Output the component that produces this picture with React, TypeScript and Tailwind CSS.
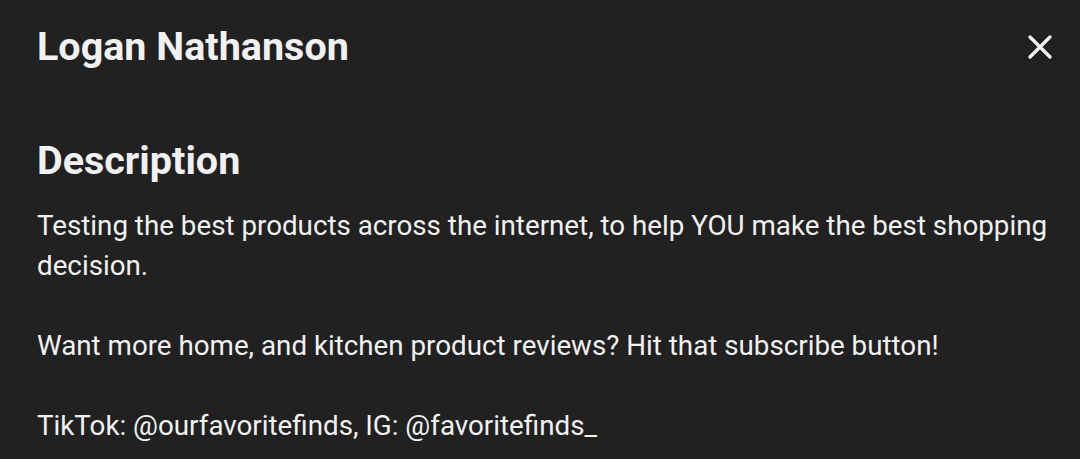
import { X } from 'lucide-react';

export default function App() {
  return (
    <div className="h-[459px] w-[1080px] overflow-hidden bg-[#212121] text-[#f1f1f1] font-['Roboto',sans-serif]">
      <div className="flex items-center justify-between pl-[37px] pr-[20px] pt-[22px]">
        <h1 className="text-[39.5px] font-bold leading-[50px]">Logan Nathanson</h1>
        <button type="button" className="flex h-[40px] w-[40px] items-center justify-center text-[#f1f1f1]">
          <X className="h-[40px] w-[40px]" strokeWidth={2} />
        </button>
      </div>

      <div className="pl-[37px] pr-[20px] pt-[64px]">
        <h2 className="text-[39.5px] font-bold leading-[50px]">Description</h2>
        <div className="mt-[20px] text-[27.75px] leading-[40px] whitespace-pre-line">
          {`Testing the best products across the internet, to help YOU make the best shopping decision.

Want more home, and kitchen product reviews? Hit that subscribe button!

TikTok: @ourfavoritefinds, IG: @favoritefinds_`}
        </div>
      </div>
    </div>
  );
}
